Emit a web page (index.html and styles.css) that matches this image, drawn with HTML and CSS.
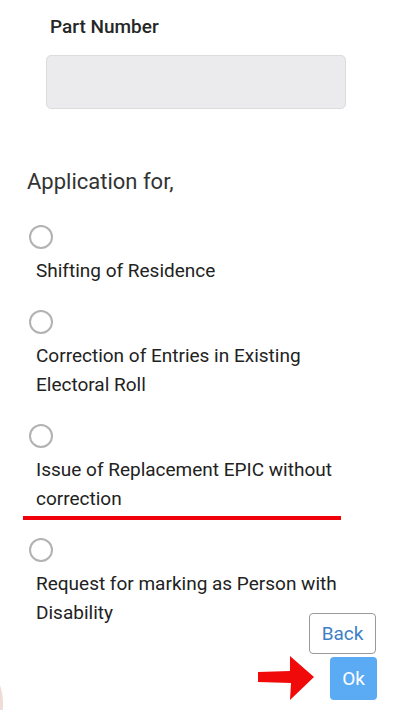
FILE: index.html
```html
<!DOCTYPE html>
<html>
<head>
<meta charset="utf-8">
<link rel="stylesheet" href="styles.css">
</head>
<body>
<div class="page">
  <div class="field">
    <div class="field-label">Part Number</div>
    <div class="field-input"></div>
  </div>
  <div class="section-title">Application for,</div>
  <div class="options">
    <div class="option">
      <span class="radio"></span>
      <div class="option-text">Shifting of Residence</div>
    </div>
    <div class="option">
      <span class="radio"></span>
      <div class="option-text">Correction of Entries in Existing<br>Electoral Roll</div>
    </div>
    <div class="option marked">
      <span class="radio"></span>
      <div class="option-text">Issue of Replacement EPIC without<br>correction</div>
      <span class="underline-mark"></span>
    </div>
    <div class="option">
      <span class="radio"></span>
      <div class="option-text">Request for marking as Person with<br>Disability</div>
    </div>
  </div>
</div>
<span class="edge-blob"></span>
<div class="actions">
  <button class="btn btn-back">Back</button>
  <div class="ok-row">
    <svg class="arrow" width="60" height="48" viewBox="0 0 60 48">
      <path d="M0 18 L32 17 L32 2 L56 23 L32 46 L33 29 L0 28 Z" fill="#f00a0a"/>
    </svg>
    <button class="btn btn-ok">Ok</button>
  </div>
</div>
</body>
</html>
```
FILE: styles.css
```css
html, body {
  margin: 0;
  padding: 0;
  background: #fff;
}
body {
  width: 400px;
  height: 710px;
  overflow: hidden;
  font-family: Roboto, "Noto Sans", sans-serif;
  color: #222;
}
.page {
  padding: 15px 0 0 0;
}
.field {
  padding-left: 46px;
}
.field-label {
  padding-left: 4px;
  font-size: 19px;
  font-weight: 500;
  line-height: 24px;
  color: #262626;
}
.field-input {
  margin-top: 16px;
  width: 298px;
  height: 52px;
  background: #ebebed;
  border: 1px solid #dcdcde;
  border-radius: 5px;
}
.section-title {
  margin-top: 59px;
  padding-left: 27px;
  font-size: 22px;
  line-height: 28px;
  color: #333;
}
.options {
  margin-top: 29px;
  padding-left: 29px;
}
.option {
  position: relative;
  display: flex;
  flex-direction: column;
  align-items: flex-start;
  margin-bottom: 25.5px;
}
.radio {
  width: 20px;
  height: 20px;
  border: 2px solid #b2b2b2;
  border-radius: 50%;
  box-sizing: content-box;
}
.option-text {
  margin-top: 6.5px;
  padding-left: 7px;
  font-size: 19px;
  line-height: 29px;
  color: #222;
}
.underline-mark {
  position: absolute;
  left: -6px;
  top: 92px;
  width: 318px;
  height: 4px;
  background: #f0000a;
}
.edge-blob {
  position: absolute;
  left: -24px;
  top: 674px;
  width: 27px;
  height: 60px;
  border-radius: 50%;
  background: #efdcd6;
}
.actions {
  position: absolute;
  right: 23px;
  bottom: 8px;
  display: flex;
  flex-direction: column;
  align-items: flex-end;
}
.btn {
  font-family: Roboto, "Noto Sans", sans-serif;
  font-size: 19px;
  border-radius: 4px;
  padding: 0;
  cursor: pointer;
}
.btn-back {
  width: 67px;
  height: 41px;
  background: #fff;
  border: 1px solid #9a9a9a;
  color: #3d7fc6;
  margin-right: 1px;
}
.ok-row {
  display: flex;
  align-items: center;
  gap: 12px;
}
.arrow {
  display: block;
}
.btn-ok {
  width: 47px;
  height: 43px;
  background: #5aabf4;
  border: none;
  color: #fff;
}
```
